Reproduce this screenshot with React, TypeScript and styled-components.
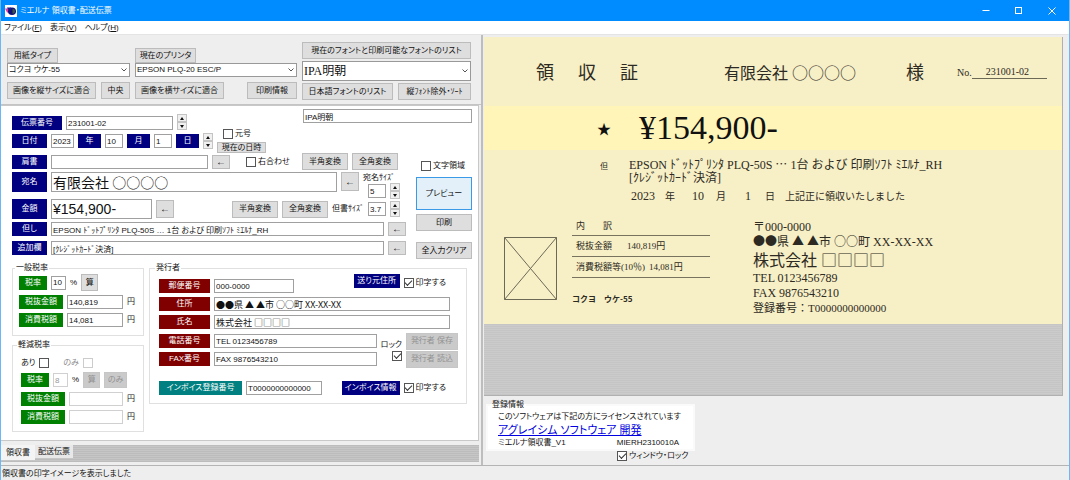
import React from "react";
import styled, { createGlobalStyle, css } from "styled-components";

const GOTHIC = '"Liberation Sans", "Noto Sans CJK JP", sans-serif';
const WIDE_GOTHIC = '"Noto Sans CJK JP", "Liberation Sans", sans-serif';
const MINCHO = '"Liberation Serif", "Noto Sans CJK JP", serif';

const NAVY = "#000080";
const GREEN = "#008000";
const MAROON = "#800000";
const TEAL = "#008080";

const GlobalStyle = createGlobalStyle`
  * { box-sizing: border-box; }
  body {
    margin: 0;
    background: #eee;
    color: #111;
    font: 8px/12px ${GOTHIC};
    font-feature-settings: "palt";
    white-space: nowrap;
  }
  button, input, select { font: inherit; font-feature-settings: inherit; color: inherit; margin: 0; }
`;

/* ---------- window frame ---------- */

const Window = styled.div`
  min-height: 100vh;
  display: flex;
  flex-direction: column;
  border: solid #6bb8f7;
  border-width: 0 1px 1px;
`;

const TitleBar = styled.header`
  height: 21px;
  display: flex;
  align-items: center;
  gap: 3px;
  padding-left: 4px;
  background: #008cff;
  color: #fff;
`;

const TitleText = styled.h1`
  flex: 1;
  margin: 0;
  font-size: 8px;
  font-weight: 400;
`;

const Captions = styled.div`
  display: flex;
  padding-right: 1px;
`;

const CaptionButton = styled.button`
  width: 33px;
  height: 21px;
  padding: 0;
  border: 0;
  background: none;
  display: grid;
  place-items: center;
`;

const MenuBar = styled.nav`
  height: 14px;
  display: flex;
  gap: 8px;
  padding-left: 3px;
  background: #fff;
  border-bottom: 1px solid #e4e4e4;
`;

const MenuItem = styled.button`
  padding: 0;
  border: 0;
  background: none;
`;

const Panes = styled.main`
  flex: 1;
  display: grid;
  grid-template-columns: minmax(482px, 482fr) minmax(586px, 586fr);
  border-bottom: 1px solid #b4b4b4;
`;

const StatusBar = styled.footer`
  height: 14px;
  padding: 2px 0 0 1px;
`;

/* ---------- shared controls ---------- */

const Button = styled.button<{ $w?: number; $h?: number; $primary?: boolean }>`
  width: ${(p) => (p.$w ? `${p.$w}px` : "auto")};
  height: ${(p) => p.$h ?? 17}px;
  flex: none;
  display: flex;
  align-items: center;
  justify-content: center;
  padding: 0;
  border: 1px solid #bcbcbc;
  background: #dedede;
  &:disabled {
    color: #929292;
    border-color: #c6c6c6;
    background: #cacaca;
  }
  ${(p) =>
    p.$primary &&
    css`
      border-color: #3a9ae8;
      background: #e3f0fa;
    `}
`;

const ArrowButton = styled(Button)`
  font-size: 10px;
`;

const Tag = styled.label<{ $w: number; $h?: number; $tone?: string }>`
  width: ${(p) => p.$w}px;
  height: ${(p) => p.$h ?? 14}px;
  flex: none;
  display: flex;
  align-items: center;
  justify-content: center;
  background: ${(p) => p.$tone ?? NAVY};
  color: #fff;
`;

const Field = styled.input<{ $w?: number; $h?: number; $size?: number; $wide?: boolean }>`
  ${(p) => (p.$w ? `width: ${p.$w}px; flex: none;` : "flex: 1; width: 0; min-width: 0;")}
  height: ${(p) => p.$h ?? 14}px;
  padding: 0 1px;
  border: 1px solid #a0a0a0;
  background: #fff;
  font-size: ${(p) => p.$size ?? 8}px;
  ${(p) => p.$wide && `font-family: ${WIDE_GOTHIC}; font-feature-settings: normal;`}
  &:disabled {
    color: #999;
    border-color: #d0d0d0;
  }
`;

const CheckLabel = styled.label<{ $muted?: boolean; $gap?: number }>`
  display: flex;
  align-items: center;
  gap: ${(p) => p.$gap ?? 2}px;
  height: 10px;
  color: ${(p) => (p.$muted ? "#8a8a8a" : "inherit")};
`;

const Check = styled.input.attrs({ type: "checkbox" })`
  appearance: none;
  width: 10px;
  height: 10px;
  flex: none;
  display: grid;
  place-items: center;
  border: 1px solid #555;
  background: #fff;
  &:disabled { border-color: #ccc; }
  &:checked::after {
    content: "";
    width: 6px;
    height: 3px;
    margin-bottom: 2px;
    border: solid #333;
    border-width: 0 0 1px 1px;
    transform: rotate(-45deg);
  }
`;

const SpinBox = styled.div`
  width: 10px;
  flex: none;
  display: grid;
  grid-template-rows: 8px 8px;
`;

const SpinButton = styled.button<{ $down?: boolean }>`
  display: grid;
  place-items: center;
  padding: 0;
  border: 1px solid #c4c4c4;
  background: #f0f0f0;
  &::before {
    content: "";
    border: solid transparent;
    border-width: ${(p) => (p.$down ? "3px 2px 0" : "0 2px 3px")};
    border-${(p) => (p.$down ? "top" : "bottom")}-color: #111;
  }
`;

const Spinner = ({ name }: { name: string }) => (
  <SpinBox>
    <SpinButton type="button" aria-label={`${name} +`} />
    <SpinButton type="button" $down aria-label={`${name} -`} />
  </SpinBox>
);

const SelectBox = styled.div<{ $tall?: boolean }>`
  position: relative;
  height: ${(p) => (p.$tall ? 20 : 14)}px;
  font-size: ${(p) => (p.$tall ? 12 : 8)}px;
  font-family: ${(p) => (p.$tall ? MINCHO : "inherit")};
  select {
    appearance: none;
    width: 100%;
    height: 100%;
    padding: 0 1px;
    border: 1px solid #999;
    border-radius: 0;
    background: #fff;
  }
  svg {
    position: absolute;
    right: 3px;
    top: 50%;
    margin-top: -2px;
    pointer-events: none;
  }
`;

const Select = ({ value, label, tall }: { value: string; label: string; tall?: boolean }) => (
  <SelectBox $tall={tall}>
    <select aria-label={label} defaultValue={value}>
      <option>{value}</option>
    </select>
    <svg width="6" height="4" viewBox="0 0 6 4" fill="none" stroke="#555">
      <path d="M.5 .5 3 3 5.5 .5" />
    </svg>
  </SelectBox>
);

const Row = styled.div<{ $gap?: number; $h?: number; $align?: string }>`
  display: flex;
  gap: ${(p) => p.$gap ?? 4}px;
  height: ${(p) => (p.$h ? `${p.$h}px` : "auto")};
  align-items: ${(p) => p.$align ?? "center"};
`;

const Stack = styled.div<{ $gap?: number; $grow?: boolean }>`
  display: flex;
  flex-direction: column;
  align-items: stretch;
  gap: ${(p) => p.$gap ?? 4}px;
  ${(p) => p.$grow && "flex: 1;"}
`;

const Spacer = styled.div<{ $w?: number }>`
  ${(p) => (p.$w ? `width: ${p.$w}px;` : "flex: 1;")}
`;

/* ---------- left pane ---------- */

const EditorPane = styled.section`
  display: flex;
  flex-direction: column;
  border-right: 2px solid #bdbdbd;
`;

const Toolbar = styled.div`
  display: grid;
  grid-template-columns: 123fr 162fr 169fr;
  gap: 5px;
  padding: 7px 10px 4px 6px;
  border-bottom: 1px solid #c4c4c4;
`;

const ToolGroup = styled.div<{ $last?: boolean }>`
  display: flex;
  flex-direction: column;
  padding-top: ${(p) => (p.$last ? 0 : 6)}px;
  gap: ${(p) => (p.$last ? 2 : 0)}px;
`;

const ToolRow = styled.div<{ $top?: number }>`
  display: flex;
  justify-content: space-between;
  margin-top: ${(p) => p.$top ?? 0}px;
`;

const Form = styled.form`
  flex: 1;
  margin-right: 2px;
  padding: 3px 6px 8px 11px;
  border: solid #c8c8c8;
  border-width: 1px 1px 1px 0;
  background: #fff;
`;

const FormTop = styled.div`
  display: grid;
  grid-template-columns: 1fr 56px;
  column-gap: 10px;
`;

const Lines = styled.div`
  display: flex;
  flex-direction: column;
`;

const Line = styled(Row)<{ $top?: number }>`
  margin-top: ${(p) => p.$top ?? 0}px;
`;

const Actions = styled.div`
  display: flex;
  flex-direction: column;
  padding-top: 31px;
`;

const ActionGroup = styled.div`
  display: flex;
  flex-direction: column;
  gap: 4px;
  padding: 6px 0 11px;
`;

const SizeBox = styled.div`
  width: 43px;
  display: flex;
  flex-direction: column;
  label { height: 11px; }
`;

const SizeInputs = styled.div`
  display: flex;
  align-items: center;
  gap: 4px;
  padding-left: 5px;
`;

const Groups = styled.div`
  display: grid;
  grid-template-columns: 132px 1fr;
  gap: 5px;
  padding: 3px 5px 0 0;
  align-items: start;
`;

const Group = styled.fieldset<{ $pad: string }>`
  margin: 0;
  min-width: 0;
  padding: ${(p) => p.$pad};
  border: 1px solid #e0e0e0;
  legend {
    height: 12px;
    padding: 0 1px;
    margin-left: -4px;
  }
`;

const Small = styled.span`
  font-size: 8px;
`;

const TabStrip = styled.div`
  height: 17px;
  display: flex;
  margin: 4px 2px 3px 0;
  background: repeating-linear-gradient(0deg, #bcbcbc 0 1px, #c6c6c6 1px 2px);
`;

const Tab = styled.button<{ $active?: boolean }>`
  width: ${(p) => (p.$active ? 34 : 38)}px;
  height: ${(p) => (p.$active ? 15 : 13)}px;
  padding: 0;
  border: 0;
  background: ${(p) => (p.$active ? "#f4f4f4" : "#e8e8e8")};
`;

/* ---------- right pane ---------- */

const PreviewPane = styled.section`
  display: flex;
  flex-direction: column;
  padding: 2px 6px 0 1px;
`;

const Canvas = styled.div`
  flex: 1;
  border: solid #b0b0b0;
  border-width: 0 1px 1px 0;
  background: repeating-linear-gradient(0deg, #c5c5c5 0 1px, #cbcbcb 1px 2px);
`;

const Receipt = styled.article`
  background: #f7efc6;
  color: #2c2a22;
  font-family: ${MINCHO};
  font-size: 12px;
  line-height: 14px;
  font-feature-settings: normal;
`;

const ReceiptHead = styled.div`
  height: 69px;
  display: grid;
  grid-template-columns: 188fr 182fr 51fr 90fr;
  align-items: center;
  padding: 2px 15px 0 52px;
`;

const ReceiptTitle = styled.h2`
  margin: 0;
  display: flex;
  gap: 24px;
  font-size: 18px;
  font-weight: 400;
`;

const Customer = styled.div<{ $size: number }>`
  font-size: ${(p) => p.$size}px;
`;

const SlipNumber = styled.div`
  display: flex;
  align-items: flex-end;
  font-size: 10px;
  line-height: 12px;
  span {
    flex: 1;
    text-align: center;
    padding-right: 4px;
    border-bottom: 1px solid #6d6957;
  }
`;

const AmountBand = styled.div`
  height: 44px;
  display: grid;
  grid-template-columns: 42px 1fr;
  align-items: center;
  padding-left: 113px;
  background: #fff5b8;
  color: #111;
  font-size: 34px;
  line-height: 44px;
`;

const Star = styled.span`
  font: 14px/14px ${WIDE_GOTHIC};
`;

const Purpose = styled.div`
  display: grid;
  grid-template-columns: 29px 1fr;
  align-items: baseline;
  padding: 8px 0 0 116px;
  line-height: 13px;
`;

const DateLine = styled.div`
  display: grid;
  grid-template-columns: 34px 27px 24px 29px 20px auto;
  justify-content: start;
  align-items: baseline;
  margin-top: 5px;
  padding-left: 2px;
  font-size: 10px;
  b { font-size: 12px; font-weight: 400; }
`;

const ReceiptFoot = styled.div`
  display: grid;
  grid-template-columns: 68px 138px 1fr;
  padding: 14px 0 7px 20px;
`;

const Stamp = styled.svg`
  margin-top: 20px;
`;

const Breakdown = styled.div`
  font-size: 9px;
  line-height: 12px;
`;

const BreakdownLine = styled.div<{ $gap: number; $h?: number }>`
  height: ${(p) => p.$h ?? 21}px;
  display: flex;
  gap: ${(p) => p.$gap}px;
  align-items: center;
  padding-left: 4px;
  border-bottom: 1px solid #77735e;
`;

const FormName = styled.div`
  margin-top: 15px;
  font: bold 8px/12px ${WIDE_GOTHIC};
`;

const Issuer = styled.address`
  padding: 3px 0 1px 43px;
  font-style: normal;
  line-height: 15px;
`;

const Company = styled.div`
  font-size: 16px;
  line-height: 21px;
`;

const Registration = styled.div`
  font-size: 11px;
`;

const Wide = styled.span`
  font-family: ${WIDE_GOTHIC};
  line-height: 1;
`;

const License = styled.div`
  height: 69px;
  padding: 4px 0 0 2px;
`;

const LicenseBox = styled.fieldset`
  width: 209px;
  margin: 0;
  padding: 1px 10px 0;
  border: 2px solid #fafafa;
  background: #fff;
  legend { height: 10px; padding: 0 2px; margin-left: -8px; line-height: 10px; }
  a { display: block; font-size: 11px; line-height: 14px; color: #0000e0; }
`;

const LicenseRow = styled.div`
  display: flex;
  justify-content: space-between;
  padding-right: 4px;
`;

const WindowLock = styled.div`
  display: flex;
  padding: 0 0 0 131px;
`;

const AppIcon = () => (
  <svg width="12" height="12" viewBox="0 0 12 12">
    <rect width="12" height="12" fill="#fff" />
    <path d="M0 3.500h4v4H2z" fill="#f0389c" />
    <ellipse cx="7" cy="6.200" rx="4" ry="3.800" fill="#10107c" />
    <path d="M7.500 3.800a2.500 2.500 0 0 1 0 5z" fill="#3b5a3a" />
    <path d="M2 2.500h4v2H3z" fill="#1b1b90" />
  </svg>
);

export default function App() {
  return (
    <Window>
      <GlobalStyle />
      <TitleBar>
        <AppIcon />
        <TitleText>ミエルナ 領収書・配送伝票</TitleText>
        <Captions>
          <CaptionButton aria-label="最小化">
            <svg width="8" height="8" stroke="#fff"><path d="M.5 3.500h7" /></svg>
          </CaptionButton>
          <CaptionButton aria-label="最大化">
            <svg width="8" height="8" stroke="#fff" fill="none"><rect x=".5" y=".5" width="6" height="6" /></svg>
          </CaptionButton>
          <CaptionButton aria-label="閉じる">
            <svg width="8" height="8" stroke="#fff"><path d="M.5 .5l7 7m0-7l-7 7" /></svg>
          </CaptionButton>
        </Captions>
      </TitleBar>
      <MenuBar>
        <MenuItem>ファイル(<u>F</u>)</MenuItem>
        <MenuItem>表示(<u>V</u>)</MenuItem>
        <MenuItem>ヘルプ(<u>H</u>)</MenuItem>
      </MenuBar>

      <Panes>
        <EditorPane>
          <Toolbar>
            <ToolGroup>
              <Button $w={51} $h={15}>用紙タイプ</Button>
              <Select label="用紙タイプ" value="コクヨ ウケ-55" />
              <ToolRow $top={5}>
                <Button $w={89}>画像を縦サイズに適合</Button>
                <Button $w={29}>中央</Button>
              </ToolRow>
            </ToolGroup>
            <ToolGroup>
              <Button $w={61} $h={15}>現在のプリンタ</Button>
              <Select label="現在のプリンタ" value="EPSON PLQ-20 ESC/P" />
              <ToolRow $top={5}>
                <Button $w={89}>画像を横サイズに適合</Button>
                <Button $w={50}>印刷情報</Button>
              </ToolRow>
            </ToolGroup>
            <ToolGroup $last>
              <Button>現在のフォントと印刷可能なフォントのリスト</Button>
              <Select tall label="フォント" value="IPA明朝" />
              <ToolRow>
                <Button $w={91}>日本語フォントのリスト</Button>
                <Button $w={73}>縦ﾌｫﾝﾄ除外・ｿｰﾄ</Button>
              </ToolRow>
            </ToolGroup>
          </Toolbar>

          <Form onSubmit={(e) => e.preventDefault()}>
            <Row $h={21} $align="flex-end">
              <Tag $w={50} htmlFor="slip">伝票番号</Tag>
              <Field $w={107} id="slip" defaultValue="231001-02" />
              <Spinner name="伝票番号" />
              <Spacer />
              <Row $align="flex-start" $h={21}>
                <Field $w={169} aria-label="フォント名" defaultValue="IPA明朝" />
              </Row>
            </Row>

            <FormTop>
              <Lines>
                <Row $h={22}>
                  <Tag $w={35} htmlFor="year">日付</Tag>
                  <Field $w={23} id="year" defaultValue="2023" />
                  <Tag $w={23} htmlFor="year">年</Tag>
                  <Field $w={18} id="month" defaultValue="10" />
                  <Tag $w={23} htmlFor="month">月</Tag>
                  <Field $w={18} id="day" defaultValue="1" />
                  <Tag $w={23} htmlFor="day">日</Tag>
                  <Spinner name="日付" />
                  <Stack $gap={3}>
                    <Row $gap={0}>
                      <Spacer $w={6} />
                      <CheckLabel><Check />元号</CheckLabel>
                    </Row>
                    <Button type="button" $w={49} $h={11}>現在の日時</Button>
                  </Stack>
                </Row>

                <Line $top={1} $h={17}>
                  <Tag $w={35} htmlFor="title">肩書</Tag>
                  <Field $w={157} id="title" defaultValue="" />
                  <ArrowButton type="button" $w={18} $h={14}>←</ArrowButton>
                  <Spacer $w={8} />
                  <CheckLabel><Check />右合わせ</CheckLabel>
                  <Spacer />
                  <Button type="button" $w={46}>半角変換</Button>
                  <Button type="button" $w={46}>全角変換</Button>
                  <Spacer $w={4} />
                </Line>

                <Line $top={2} $h={27} $align="flex-start">
                  <Tag $w={35} $h={20} htmlFor="name">宛名</Tag>
                  <Field $h={20} $size={14} $wide id="name" defaultValue="有限会社 ○○○○" />
                  <ArrowButton type="button" $w={18} $h={19}>←</ArrowButton>
                  <SizeBox>
                    <label htmlFor="nameSize">宛名ｻｲｽﾞ</label>
                    <SizeInputs>
                      <Field $w={18} id="nameSize" defaultValue="5" />
                      <Spinner name="宛名サイズ" />
                    </SizeInputs>
                  </SizeBox>
                </Line>

                <Line $h={20}>
                  <Tag $w={35} $h={20} htmlFor="amount">金額</Tag>
                  <Field $w={101} $h={20} $size={14} id="amount" defaultValue="¥154,900-" />
                  <ArrowButton type="button" $w={18} $h={18}>←</ArrowButton>
                  <Spacer />
                  <Button type="button" $w={46}>半角変換</Button>
                  <Button type="button" $w={46}>全角変換</Button>
                  <label htmlFor="noteSize">但書ｻｲｽﾞ</label>
                  <Field $w={18} id="noteSize" defaultValue="3.7" />
                  <Spinner name="但書サイズ" />
                  <Spacer $w={2} />
                </Line>

                <Line $top={3}>
                  <Tag $w={35} htmlFor="note">但し</Tag>
                  <Field id="note" defaultValue="EPSON ﾄﾞｯﾄﾌﾟﾘﾝﾀ PLQ-50S … 1台 および 印刷ｿﾌﾄ ﾐｴﾙﾅ_RH" />
                  <ArrowButton type="button" $w={18} $h={14}>←</ArrowButton>
                </Line>
                <Line $top={5}>
                  <Tag $w={35} htmlFor="extra">追加欄</Tag>
                  <Field id="extra" defaultValue="[ｸﾚｼﾞｯﾄｶｰﾄﾞ決済]" />
                  <ArrowButton type="button" $w={18} $h={14}>←</ArrowButton>
                </Line>
              </Lines>

              <Actions>
                <Row $gap={0}>
                  <Spacer $w={5} />
                  <CheckLabel><Check />文字領域</CheckLabel>
                </Row>
                <ActionGroup>
                  <Button type="button" $h={33} $primary>プレビュー</Button>
                  <Button type="button">印刷</Button>
                </ActionGroup>
                <Button type="button">全入力クリア</Button>
              </Actions>
            </FormTop>

            <Groups>
              <Stack $gap={3}>
                <Group $pad="0 8px 8px 6px">
                  <legend>一般税率</legend>
                  <Stack>
                    <Row $h={17}>
                      <Tag $tone={GREEN} $w={28} htmlFor="rate">税率</Tag>
                      <Field $w={15} id="rate" defaultValue="10" />
                      <Small>%</Small>
                      <Button type="button" $w={17}>算</Button>
                    </Row>
                    <Row>
                      <Tag $tone={GREEN} $w={44} htmlFor="net">税抜金額</Tag>
                      <Field id="net" defaultValue="140,819" />
                      円
                    </Row>
                    <Row>
                      <Tag $tone={GREEN} $w={44} htmlFor="tax">消費税額</Tag>
                      <Field id="tax" defaultValue="14,081" />
                      円
                    </Row>
                  </Stack>
                </Group>

                <Group $pad="7px 8px 7px 8px">
                  <legend>軽減税率</legend>
                  <Stack>
                    <Row $h={10} $gap={14}>
                      <CheckLabel $gap={4}>あり<Check /></CheckLabel>
                      <CheckLabel $gap={4} $muted>のみ<Check disabled /></CheckLabel>
                    </Row>
                    <Row>
                      <Tag $tone={GREEN} $w={28} htmlFor="rate2">税率</Tag>
                      <Field $w={15} id="rate2" defaultValue="8" disabled />
                      <Small>%</Small>
                      <Button type="button" $w={17} $h={16} disabled>算</Button>
                      <Button type="button" $w={23} $h={16} disabled>のみ</Button>
                    </Row>
                    <Row>
                      <Tag $tone={GREEN} $w={44} htmlFor="net2">税抜金額</Tag>
                      <Field id="net2" disabled />
                      円
                    </Row>
                    <Row>
                      <Tag $tone={GREEN} $w={44} htmlFor="tax2">消費税額</Tag>
                      <Field id="tax2" disabled />
                      円
                    </Row>
                  </Stack>
                </Group>
              </Stack>

              <Group $pad="0 8px 8px 9px">
                <legend>発行者</legend>
                <Stack>
                  <Row $h={19} $align="flex-end">
                    <Tag $tone={MAROON} $w={51} htmlFor="zip">郵便番号</Tag>
                    <Field $w={80} id="zip" defaultValue="000-0000" />
                    <Spacer />
                    <Row $h={19} $align="flex-start">
                      <Tag $w={46} htmlFor="printFrom">送り元住所</Tag>
                      <Row $h={18}><CheckLabel><Check id="printFrom" defaultChecked />印字する</CheckLabel></Row>
                    </Row>
                    <Spacer $w={8} />
                  </Row>
                  <Row>
                    <Tag $tone={MAROON} $w={51} htmlFor="addr">住所</Tag>
                    <Field $size={9} $wide id="addr" defaultValue="●●県 ▲ ▲市 ○○町 XX-XX-XX" />
                    <Spacer $w={4} />
                  </Row>
                  <Row>
                    <Tag $tone={MAROON} $w={51} htmlFor="company">氏名</Tag>
                    <Field $size={9} $wide id="company" defaultValue="株式会社 □□□□" />
                    <Spacer $w={4} />
                  </Row>
                  <Row $h={34}>
                    <Stack $grow>
                      <Row>
                        <Tag $tone={MAROON} $w={51} htmlFor="tel">電話番号</Tag>
                        <Field id="tel" defaultValue="TEL 0123456789" />
                      </Row>
                      <Row>
                        <Tag $tone={MAROON} $w={51} htmlFor="fax">FAX番号</Tag>
                        <Field id="fax" defaultValue="FAX 9876543210" />
                      </Row>
                    </Stack>
                    <Stack $gap={0}>
                      <Spacer />
                      <label htmlFor="lock">ロック</label>
                      <Row $gap={0}><Spacer /><Check id="lock" defaultChecked /></Row>
                    </Stack>
                    <Stack $gap={1}>
                      <Button type="button" $w={52} disabled>発行者 保存</Button>
                      <Button type="button" $w={52} disabled>発行者 読込</Button>
                    </Stack>
                  </Row>
                  <Line $top={10}>
                    <Tag $tone={TEAL} $w={83} htmlFor="invoice">インボイス登録番号</Tag>
                    <Field $w={76} id="invoice" defaultValue="T0000000000000" />
                    <Spacer />
                    <Tag $w={58} htmlFor="printInvoice">インボイス情報</Tag>
                    <CheckLabel><Check id="printInvoice" defaultChecked />印字する</CheckLabel>
                    <Spacer $w={8} />
                  </Line>
                </Stack>
              </Group>
            </Groups>
          </Form>

          <TabStrip role="tablist">
            <Tab type="button" role="tab" $active>領収書</Tab>
            <Tab type="button" role="tab">配送伝票</Tab>
          </TabStrip>
        </EditorPane>

        <PreviewPane>
          <Canvas>
            <Receipt>
              <ReceiptHead>
                <ReceiptTitle><span>領</span><span>収</span><span>証</span></ReceiptTitle>
                <Customer $size={16}>有限会社 <Wide>○○○○</Wide></Customer>
                <Customer $size={18}>様</Customer>
                <SlipNumber>No.<span>231001-02</span></SlipNumber>
              </ReceiptHead>
              <AmountBand><Star>★</Star>¥154,900-</AmountBand>
              <Purpose>
                <Small>但</Small>
                <div>
                  <div>EPSON ﾄﾞｯﾄﾌﾟﾘﾝﾀ PLQ-50S <Wide lang="ja">…</Wide> 1台 および 印刷ｿﾌﾄ ﾐｴﾙﾅ_RH</div>
                  <div>[ｸﾚｼﾞｯﾄｶｰﾄﾞ決済]</div>
                  <DateLine>
                    <b>2023</b><span>年</span><b>10</b><span>月</span><b>1</b>
                    <span>日　上記正に領収いたしました</span>
                  </DateLine>
                </div>
              </Purpose>
              <ReceiptFoot>
                <Stamp width="53" height="63" fill="none" stroke="#6d6957">
                  <path d="M.5 .5h52v62H.5zM.5 .5l52 62M52.500 .5l-52 62" />
                </Stamp>
                <Breakdown>
                  <BreakdownLine $gap={18} $h={19}><span>内</span><span>訳</span></BreakdownLine>
                  <BreakdownLine $gap={15}><span>税抜金額</span><span>140,819円</span></BreakdownLine>
                  <BreakdownLine $gap={4}><span>消費税額等(10％)</span><span>14,081円</span></BreakdownLine>
                  <FormName>コクヨ　ウケ-55</FormName>
                </Breakdown>
                <Issuer>
                  <div>〒000-0000</div>
                  <div><Wide>●●</Wide>県 <Wide>▲</Wide> <Wide>▲</Wide>市 <Wide>○○</Wide>町 XX-XX-XX</div>
                  <Company>株式会社 <Wide>□□□□</Wide></Company>
                  <div>TEL 0123456789</div>
                  <div>FAX 9876543210</div>
                  <Registration>登録番号：T0000000000000</Registration>
                </Issuer>
              </ReceiptFoot>
            </Receipt>
          </Canvas>
          <License>
            <LicenseBox>
              <legend>登録情報</legend>
              <div>このソフトウェアは下記の方にライセンスされています</div>
              <a href="#developer">アグレイシム ソフトウェア 開発</a>
              <LicenseRow><span>ミエルナ領収書_V1</span><span>MIERH2310010A</span></LicenseRow>
            </LicenseBox>
            <WindowLock>
              <CheckLabel><Check defaultChecked />ウィンドウ・ロック</CheckLabel>
            </WindowLock>
          </License>
        </PreviewPane>
      </Panes>
      <StatusBar>領収書の印字イメージを表示しました</StatusBar>
    </Window>
  );
}
